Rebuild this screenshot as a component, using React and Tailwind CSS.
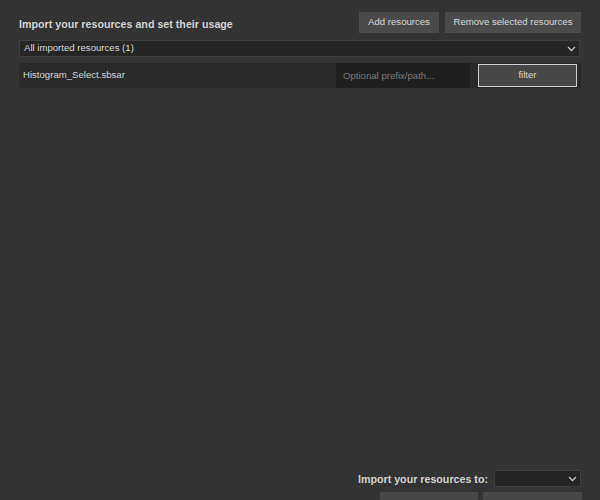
import React from "react";

function Chevron() {
  return (
    <svg width="9" height="6" viewBox="0 0 9 6" className="shrink-0">
      <path d="M1 1 L4.5 4.5 L8 1" fill="none" stroke="#c8c8c8" strokeWidth="1.3" />
    </svg>
  );
}

export default function App() {
  return (
    <div
      className="w-[600px] h-[500px] overflow-hidden bg-[#333333] text-[#cfcfcf]"
      style={{ fontFamily: '"Liberation Sans", Arial, sans-serif' }}
    >
      <div className="h-[513px] flex flex-col pt-[12px] pl-[19px] pr-[19px]">
        <div className="flex items-center justify-between h-[21px]">
          <div className="font-bold text-[10.7px] text-[#d2d2d2] pt-[3px]">
            Import your resources and set their usage
          </div>
          <div className="flex gap-[6px] h-full">
            <button className="w-[80px] h-full bg-[#4a4a4a] text-[9.6px] text-[#d8d8d8]">
              Add resources
            </button>
            <button className="w-[136px] h-full bg-[#4a4a4a] text-[9.6px] text-[#d8d8d8]">
              Remove selected resources
            </button>
          </div>
        </div>

        <div className="mt-[7px] mr-[1px] h-[17px] bg-[#262626] border border-[#3e3e3e] flex items-center justify-between pl-[4px] pr-[3px]">
          <span className="text-[9.6px] text-[#d8d8d8]">All imported resources (1)</span>
          <Chevron />
        </div>

        <div className="mt-[6px] h-[25px] bg-[#2a2a2a] flex items-center pl-[4px] pr-[4px]">
          <span className="flex-1 text-[9.6px] text-[#d8d8d8]">Histogram_Select.sbsar</span>
          <input
            className="w-[134px] h-full bg-[#1f1f1f] pl-[7px] text-[9.6px] text-[#d8d8d8] placeholder:text-[#7a7a7a] outline-none"
            placeholder="Optional prefix/path..."
          />
          <button className="ml-[8px] w-[99px] h-[23px] bg-[#474747] border border-[#d0d0d0] text-[9.6px] text-[#d8d8d8]">
            filter
          </button>
        </div>

        <div className="flex-1" />

        <div className="flex items-center justify-end h-[17px]">
          <span className="font-bold text-[10.7px] text-[#d2d2d2] mr-[6px] pt-[1px]">
            Import your resources to:
          </span>
          <div className="w-[87px] h-full bg-[#262626] border border-[#3e3e3e] flex items-center justify-end pr-[3px]">
            <Chevron />
          </div>
        </div>
        <div className="mt-[5px] flex justify-end gap-[5px] h-[21px] -mr-[1px]">
          <button className="w-[98px] h-full bg-[#474747]"></button>
          <button className="w-[99px] h-full bg-[#474747]"></button>
        </div>
      </div>
    </div>
  );
}
